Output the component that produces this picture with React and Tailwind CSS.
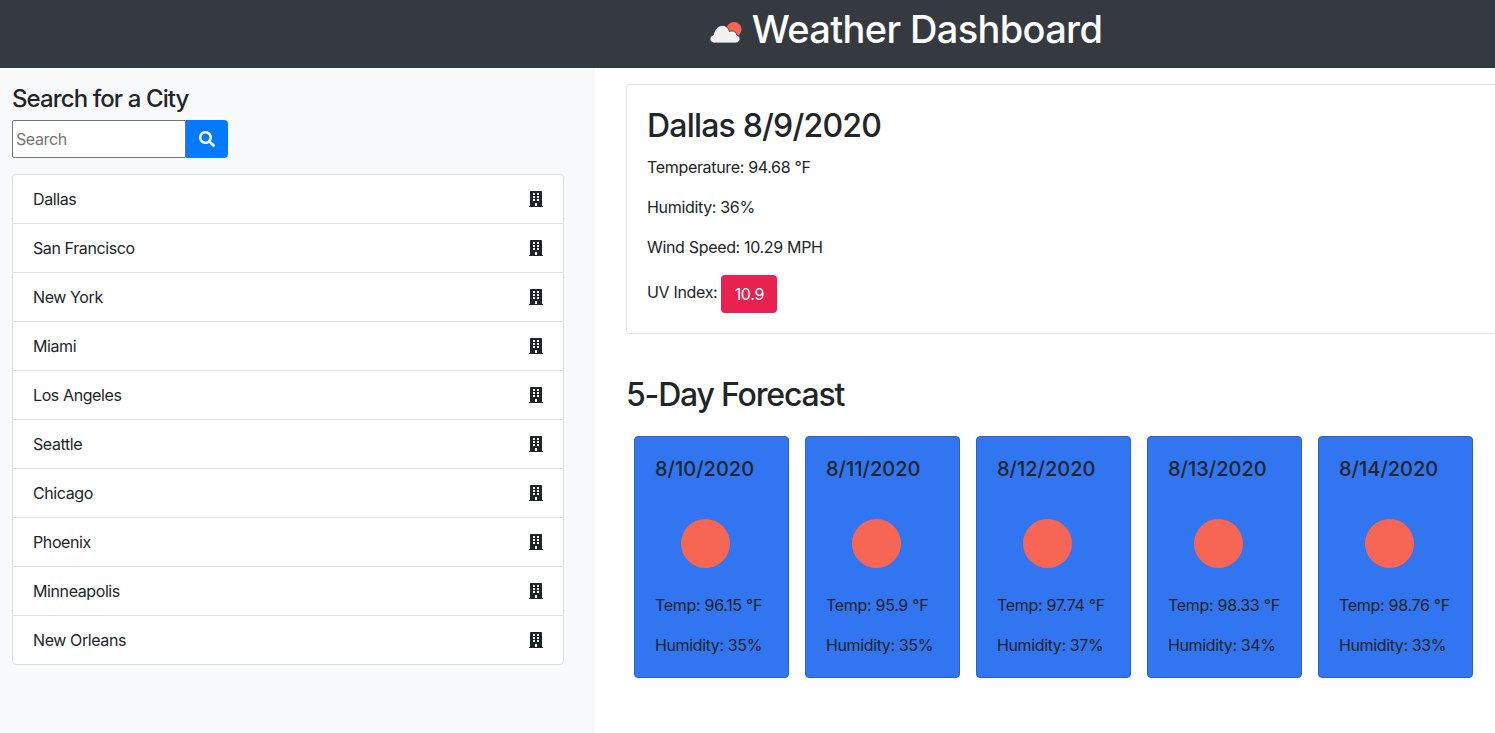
import React from "react";
import { FaBuilding, FaSearch } from "react-icons/fa";

const cities = ["Dallas","San Francisco","New York","Miami","Los Angeles","Seattle","Chicago","Phoenix","Minneapolis","New Orleans"];
const days = [
  ["8/10/2020","96.15","35"],
  ["8/11/2020","95.9","35"],
  ["8/12/2020","97.74","37"],
  ["8/13/2020","98.33","34"],
  ["8/14/2020","98.76","33"],
];

function Logo() {
  return (
    <svg width="32" height="24" viewBox="0 0 32 24" className="mr-[10px] mt-[21px] shrink-0">
      <circle cx="24" cy="8.5" r="7.5" fill="#f76654" />
      <path d="M4.5 22C2 22 0 20.2 0 18C0 16 1.4 14.4 3.4 14C4.2 8.5 8 4.5 12.5 4.5C15.8 4.5 18.3 6.6 19.4 10.6C20.2 10.2 21 10 22 10C24.5 10 26.3 11.6 26.6 14C28.6 14.5 30 16 30 18C30 20.2 28 22 25.5 22Z" fill="#f1f1f1" stroke="#343a40" strokeWidth="0.8" />
    </svg>
  );
}

export default function App() {
  return (
    <div className="h-[733px] overflow-hidden bg-white text-[#212529] font-['Inter','Liberation_Sans',sans-serif]">
      <header className="h-[68px] bg-[#343a40] flex items-start justify-center pl-[317px]">
        <Logo />
        <h1 className="text-[38px] leading-[58px] font-medium text-white tracking-[-0.65px] whitespace-nowrap">Weather Dashboard</h1>
      </header>
      <div className="flex h-[665px]">
        <aside className="w-[595px] shrink-0 bg-[#f8f9fa] px-3 pt-[16px]">
          <h2 className="text-[24px] leading-[29px] font-medium tracking-[-0.9px]">Search for a City</h2>
          <div className="flex mt-[7px] h-[38px] w-[216px]">
            <div className="w-[174px] border border-[#767676] rounded-l-[2px] bg-white pl-[3px] text-[16px] leading-[36px] text-[#757575] tracking-[-0.4px]">Search</div>
            <button className="w-[42px] bg-[#007bff] rounded-r-[4px] flex items-center justify-center text-white">
              <FaSearch size={16} />
            </button>
          </div>
          <ul className="mt-[16px] w-[552px] border border-[#dfdfdf] rounded-[4px] bg-white text-[16px] tracking-[-0.4px]">
            {cities.map((c, i) => (
              <li key={c} className={i < cities.length - 1 ? "h-[49px] flex items-center justify-between pl-5 pr-[19px] border-b border-[#dfdfdf]" : "h-[48px] flex items-center justify-between pl-5 pr-[19px]"}>
                <span>{c}</span>
                <FaBuilding size={16} className="text-[#212529]" />
              </li>
            ))}
          </ul>
        </aside>
        <main className="flex-1 min-w-0 pl-[31px] pt-4 overflow-hidden">
          <section className="w-[900px] h-[250px] border border-[#dfdfdf] rounded-[4px] px-5 pt-[22px] text-[16px] leading-[24px] tracking-[-0.33px]">
            <h2 className="text-[32px] leading-[38px] font-medium tracking-[-0.8px]">Dallas 8/9/2020</h2>
            <p className="mt-[10px]">Temperature: 94.68 °F</p>
            <p className="mt-4">Humidity: 36%</p>
            <p className="mt-4">Wind Speed: 10.29 MPH</p>
            <p className="mt-[16px] flex items-center">
              <span className="mb-[4px]">UV Index:</span>
              <span className="ml-[4px] w-[56px] h-[38px] rounded-[4px] bg-[#e8214f] text-white flex items-center justify-center">10.9</span>
            </p>
          </section>
          <h2 className="mt-[42px] text-[32px] leading-[38px] font-medium tracking-[-1.2px]">5-Day Forecast</h2>
          <div className="flex gap-4 mt-[22px] pl-2">
            {days.map(([d, t, h]) => (
              <div key={d} className="w-[155px] h-[242px] shrink-0 rounded-[4px] border border-[#2a62c8] bg-[#3275f0] px-5 pt-5">
                <div className="text-[20px] leading-[24px] font-medium">{d}</div>
                <div className="mt-[38px] ml-[26px] w-[49px] h-[49px] rounded-full bg-[#f76654]" />
                <p className="mt-[25px] text-[16px] leading-[24px] tracking-[-0.3px] whitespace-nowrap">Temp: {t} °F</p>
                <p className="mt-4 text-[16px] leading-[24px] tracking-[-0.38px] whitespace-nowrap">Humidity: {h}%</p>
              </div>
            ))}
          </div>
        </main>
      </div>
    </div>
  );
}
